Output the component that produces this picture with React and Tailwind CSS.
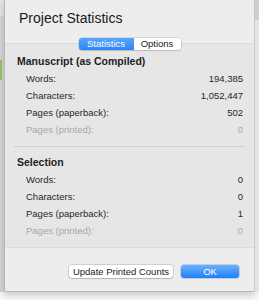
import React from "react";

const manuscript = [
  { label: "Words:", value: "194,385" },
  { label: "Characters:", value: "1,052,447" },
  { label: "Pages (paperback):", value: "502" },
  { label: "Pages (printed):", value: "0", dim: true },
];

const selection = [
  { label: "Words:", value: "0" },
  { label: "Characters:", value: "0" },
  { label: "Pages (paperback):", value: "1" },
  { label: "Pages (printed):", value: "0", dim: true },
];

function Section({ title, rows }) {
  return (
    <div>
      <div className="h-[18px] leading-[18px] pl-[12px] text-[10.5px] font-bold text-[#1e1e1e]">
        {title}
      </div>
      {rows.map((row) => (
        <div
          key={row.label}
          className={`flex justify-between h-[17px] leading-[17px] pl-[21px] pr-[11px] text-[9.5px] ${
            row.dim ? "text-[#a8a8a8]" : "text-[#262626]"
          }`}
        >
          <span>{row.label}</span>
          <span>{row.value}</span>
        </div>
      ))}
    </div>
  );
}

export default function App() {
  return (
    <div
      className="flex w-[259px] h-[300px] overflow-hidden bg-[#f6f6f6]"
      style={{ fontFamily: '"Liberation Sans", Arial, sans-serif' }}
    >
      <div className="w-[4px] h-[292px] flex flex-col bg-[#d4d4d4]">
        <div className="h-[16px] bg-[#e4e4e4]" />
        <div className="h-[44px]" />
        <div className="h-[20px] w-[2px] bg-[#8fc26a]" />
      </div>

      <div className="w-[250px] h-[292px] flex flex-col bg-[#ededed] border-l border-b border-[#b9b9b9] shadow-[0_3px_6px_rgba(0,0,0,0.18)]">
        <div className="h-[43px] pl-[14px] pt-[8px] text-[14px] text-[#1a1a1a]">
          Project Statistics
        </div>

        <div className="relative h-[204px] bg-[#e6e6e6] border-t border-[#dadada]">
          <div className="absolute -top-[6px] left-1/2 -translate-x-1/2 flex h-[12px] rounded-[3px] overflow-hidden shadow-[0_0_0_0.5px_rgba(0,0,0,0.2),0_1px_1px_rgba(0,0,0,0.1)] text-[9.5px] leading-[12px]">
            <div className="w-[55px] text-center text-white bg-gradient-to-b from-[#5aa6fa] to-[#2c83f6]">
              Statistics
            </div>
            <div className="w-[47px] text-center text-[#1a1a1a] bg-white">
              Options
            </div>
          </div>

          <div className="pt-[8px]">
            <Section title="Manuscript (as Compiled)" rows={manuscript} />
            <div className="mt-[8px] mx-[9px] h-px bg-[#d0d0d0]" />
            <div className="mt-[6px]">
              <Section title="Selection" rows={selection} />
            </div>
          </div>
        </div>

        <div className="flex flex-1 justify-end items-start gap-[8px] pt-[17px] pr-[15px] border-t border-[#dcdcdc]">
          <button className="h-[13px] w-[104px] rounded-[3px] bg-white text-[9.5px] leading-[13px] text-[#1a1a1a] shadow-[0_0_0_0.5px_rgba(0,0,0,0.25),0_1px_1px_rgba(0,0,0,0.12)]">
            Update Printed Counts
          </button>
          <button className="h-[13px] w-[58px] rounded-[3px] bg-gradient-to-b from-[#6ab1fb] to-[#1b7ff8] text-[9.5px] leading-[13px] text-white shadow-[0_0_0_0.5px_rgba(0,60,160,0.35)]">
            OK
          </button>
        </div>
      </div>

      <div className="w-[5px] h-[292px] flex flex-col bg-[#e4e4e4] border-l border-[#c8c8c8]">
        <div className="h-[20px] bg-[#cfcfcf]" />
      </div>
    </div>
  );
}
